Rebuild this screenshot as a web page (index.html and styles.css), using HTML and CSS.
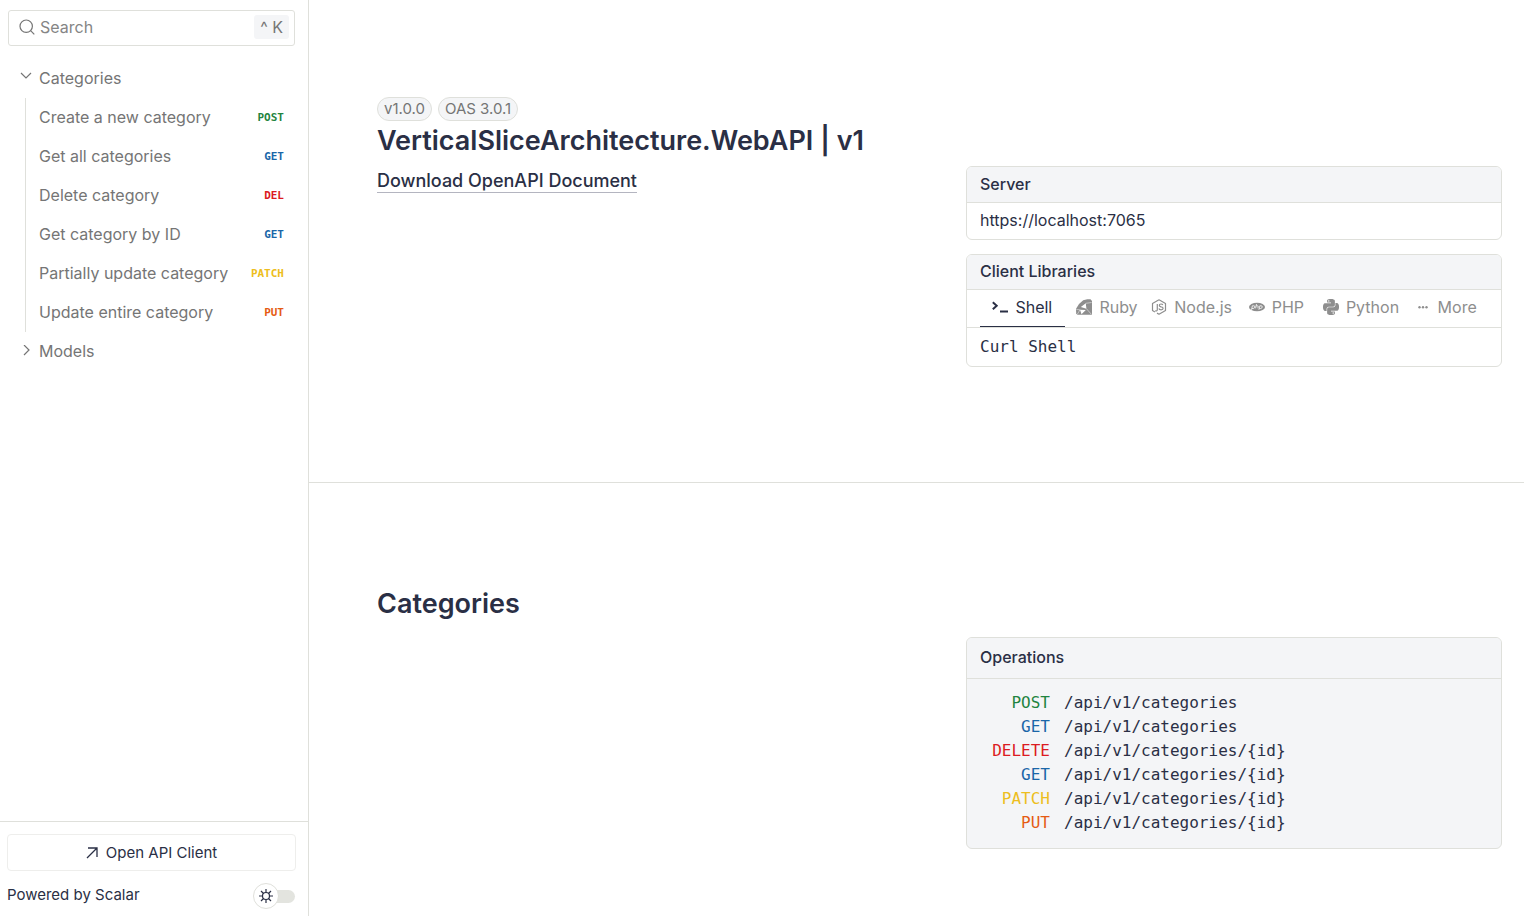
FILE: index.html
```html
<!DOCTYPE html>
<html lang="en">
<head>
<meta charset="utf-8">
<meta name="viewport" content="width=device-width, initial-scale=1">
<title>VerticalSliceArchitecture.WebAPI | v1</title>
<link rel="stylesheet" href="styles.css">
</head>
<body>
<div class="layout">
  <aside class="sidebar">
    <label class="search">
      <svg class="search-icon" viewBox="0 0 16 16" aria-hidden="true"><circle cx="7.2" cy="7.2" r="6.2"/><path d="M11.6 11.6l3.7 3.7"/></svg>
      <input class="search-input" type="search" placeholder="Search" aria-label="Search">
      <kbd class="shortcut"><span class="shortcut-mod">^</span> K</kbd>
    </label>
    <nav class="nav" aria-label="API reference">
      <a class="nav-item" href="#categories"><svg class="chevron" viewBox="0 0 12 12" aria-hidden="true"><path d="M1 1l5 5 5-5"/></svg>Categories</a>
      <div class="nav-group">
        <a class="nav-item nav-child" href="#op1">Create a new category<span class="method post">POST</span></a>
        <a class="nav-item nav-child" href="#op2">Get all categories<span class="method get">GET</span></a>
        <a class="nav-item nav-child" href="#op3">Delete category<span class="method delete">DEL</span></a>
        <a class="nav-item nav-child" href="#op4">Get category by ID<span class="method get">GET</span></a>
        <a class="nav-item nav-child" href="#op5">Partially update category<span class="method patch">PATCH</span></a>
        <a class="nav-item nav-child" href="#op6">Update entire category<span class="method put">PUT</span></a>
      </div>
      <a class="nav-item" href="#models"><svg class="chevron" viewBox="0 0 12 12" aria-hidden="true"><path d="M4 0l5 5-5 5"/></svg>Models</a>
    </nav>
    <footer class="sidebar-footer">
      <button class="client-button" type="button"><svg class="arrow" viewBox="0 0 12 12" aria-hidden="true"><path d="M1 11L11 1M2 1h9v9"/></svg>Open API Client</button>
      <div class="footer-row">
        <a class="powered" href="#scalar">Powered by Scalar</a>
        <label class="toggle">
          <input class="toggle-input" type="checkbox" aria-label="Dark mode">
          <span class="toggle-knob"><svg class="sun" viewBox="0 0 14 14" aria-hidden="true"><circle cx="7" cy="7" r="3.5"/><path d="M7 0v3.5M7 10.5V14M0 7h3.5M10.5 7H14M2 2l2.5 2.5M9.5 9.5L12 12M12 2L9.500 4.500M4.500 9.500L2 12"/></svg></span>
        </label>
      </div>
    </footer>
  </aside>

  <main class="content">
    <section class="section intro">
      <div class="section-text">
        <div class="badges"><span class="badge">v1.0.0</span><span class="badge">OAS 3.0.1</span></div>
        <h1 class="title">VerticalSliceArchitecture.WebAPI | v1</h1>
        <a class="download" href="#openapi">Download OpenAPI Document</a>
      </div>
      <div class="section-cards">
        <div class="card">
          <h2 class="card-head">Server</h2>
          <div class="card-row">https://localhost:7065</div>
        </div>
        <div class="card">
          <h2 class="card-head card-head-tabs">Client Libraries</h2>
          <div class="tabs">
            <button class="tab active" type="button"><svg class="lang" viewBox="0 0 16 16" aria-hidden="true"><path fill="none" stroke="currentColor" stroke-width="2" d="M.8 3.300L4.700 6.800.8 10.300M8 12.600h8"/></svg>Shell</button>
            <button class="tab" type="button"><svg class="lang" viewBox="0 0 16 16" aria-hidden="true"><path fill="currentColor" d="M11.300.3L14.500.2 16 2v13.700L1.200 15.800.2 14.600 0 9.700 3 5 7.200 1.300z"/><path fill="#fff" d="M9.800 4.300l.6 5.400-5.600-1.600zM4 10.800l5.800.2-4.300 4.300z"/><path fill="none" stroke="#fff" stroke-width=".5" d="M.3 10.500l3.700.3L1.200 15.500M10.400 9.700l5 5.600M9.800 4.300l5.800-.8"/></svg>Ruby</button>
            <button class="tab" type="button"><svg class="lang" viewBox="0 0 16 16" aria-hidden="true"><path fill="none" stroke="currentColor" stroke-width="1.200" stroke-linejoin="round" d="M8 .8l6.500 3.700v7L8 15.200l-2-1.100M3.900 13l-2.400-1.500v-7L8 .8"/><path fill="none" stroke="currentColor" stroke-width="1.200" d="M6.300 5v5.500q0 2-2.200 1.300M11.800 6Q11.300 5 10 5 8.300 5 8.300 6.300q0 1.200 1.800 1.500 2 .2 2 1.500 0 1.500-2 1.500-1.900 0-2.200-1.300"/></svg>Node.js</button>
            <button class="tab" type="button"><svg class="lang" viewBox="0 0 16 16" aria-hidden="true"><ellipse cx="8" cy="8" rx="8" ry="4.300" fill="currentColor"/><path fill="none" stroke="#fff" stroke-width=".8" d="M2.500 10.800l.9-4h1.400q1.300 0 1 1.300-.3 1.400-1.600 1.400H3M7.500 5l-.9 4.300M7.200 6.800h1.300q.9 0 .7.900l-.3 1.600M9.900 10.800l.9-4h1.400q1.300 0 1 1.300-.3 1.400-1.600 1.400h-1.200"/></svg>PHP</button>
            <button class="tab" type="button"><svg class="lang" viewBox="0 0 24 24" aria-hidden="true"><path fill="currentColor" d="M14.25.18l.9.2.73.26.59.3.45.32.34.34.25.34.16.33.1.3.04.26.02.2-.01.13V8.500l-.05.63-.13.55-.21.46-.26.38-.3.31-.33.25-.35.19-.35.14-.33.1-.3.07-.26.04-.21.02H8.770l-.69.05-.59.14-.5.22-.41.27-.33.32-.27.35-.2.36-.15.37-.1.35-.07.32-.04.27-.02.21v3.060H3.170l-.21-.03-.28-.07-.32-.12-.35-.18-.36-.26-.36-.36-.35-.46-.32-.59-.28-.73-.21-.88-.14-1.050-.05-1.230.06-1.220.16-1.040.24-.87.32-.71.36-.57.4-.44.42-.33.42-.24.4-.16.36-.1.32-.05.24-.01h.16l.06.01h8.160v-.83H6.180l-.01-2.750-.02-.37.05-.34.11-.31.17-.28.25-.26.31-.23.38-.2.44-.18.51-.15.58-.12.64-.1.71-.06.77-.04.84-.02 1.270.05zm-6.300 1.980l-.23.33-.08.41.08.41.23.34.33.22.41.09.41-.09.33-.22.23-.34.08-.41-.08-.41-.23-.33-.33-.22-.41-.09-.41.09zm13.090 3.950l.28.06.32.12.35.18.36.27.36.35.35.47.32.59.28.73.21.88.14 1.040.05 1.230-.06 1.230-.16 1.040-.24.86-.32.71-.36.57-.4.45-.42.33-.42.24-.4.16-.36.09-.32.05-.24.02-.16-.01h-8.220v.82h5.840l.01 2.760.02.36-.05.34-.11.31-.17.29-.25.25-.31.24-.38.2-.44.17-.51.15-.58.13-.64.09-.71.07-.77.04-.84.01-1.270-.04-1.070-.14-.9-.2-.73-.25-.59-.3-.45-.33-.34-.34-.25-.34-.16-.33-.1-.3-.04-.25-.02-.2.01-.13v-5.340l.05-.64.13-.54.21-.46.26-.38.3-.32.33-.24.35-.2.35-.14.33-.1.3-.06.26-.04.21-.02.13-.01h5.840l.69-.05.59-.14.5-.21.41-.28.33-.32.27-.35.2-.36.15-.36.1-.35.07-.32.04-.28.02-.21V6.070h2.090l.14.01zm-6.470 14.250l-.23.33-.08.41.08.41.23.33.33.23.41.08.41-.08.33-.23.23-.33.08-.41-.08-.41-.23-.33-.33-.23-.41-.08-.41.08z"/></svg>Python</button>
            <button class="tab" type="button"><svg class="lang" viewBox="0 0 16 16" aria-hidden="true"><g fill="currentColor"><circle cx="4.500" cy="8.300" r="1.200"/><circle cx="8" cy="8.300" r="1.200"/><circle cx="11.500" cy="8.300" r="1.200"/></g></svg>More</button>
          </div>
          <div class="card-row card-row-code mono">Curl Shell</div>
        </div>
      </div>
    </section>

    <section class="section group" id="categories">
      <div class="section-text"><h2 class="title">Categories</h2></div>
      <div class="section-cards">
        <div class="card card-filled">
          <h3 class="card-head card-head-tall">Operations</h3>
          <div class="operations mono">
            <a class="operation" href="#op1"><span class="verb post">POST</span><span>/api/v1/categories</span></a>
            <a class="operation" href="#op2"><span class="verb get">GET</span><span>/api/v1/categories</span></a>
            <a class="operation" href="#op3"><span class="verb delete">DELETE</span><span>/api/v1/categories/{id}</span></a>
            <a class="operation" href="#op4"><span class="verb get">GET</span><span>/api/v1/categories/{id}</span></a>
            <a class="operation" href="#op5"><span class="verb patch">PATCH</span><span>/api/v1/categories/{id}</span></a>
            <a class="operation" href="#op6"><span class="verb put">PUT</span><span>/api/v1/categories/{id}</span></a>
          </div>
        </div>
      </div>
    </section>
  </main>
</div>
</body>
</html>
```
FILE: styles.css
```css
:root {
  --text: #2a2f45;
  --muted: #757575;
  --faint: #8e8e8e;
  --line: #dfe0db;
  --fill: #f4f5f7;
}

* { box-sizing: border-box; }

body {
  margin: 0;
  background: #fff;
  color: var(--text);
  font: 400 16px/24px Inter, "Liberation Sans", sans-serif;
}

a { color: inherit; text-decoration: none; }
h1, h2, h3 { margin: 0; }
button, input, kbd { font: inherit; color: inherit; }
svg { flex: none; }

.layout {
  display: grid;
  grid-template-columns: 309px 1fr;
  min-height: 100vh;
}

.sidebar {
  position: sticky;
  top: 0;
  height: 100vh;
  display: flex;
  flex-direction: column;
  border-right: 1px solid var(--line);
  color: var(--muted);
}

.search {
  display: flex;
  align-items: center;
  gap: 5px;
  margin: 10px 13px 0 8px;
  height: 36px;
  padding: 0 5px 2px 10px;
  border: 1px solid var(--line);
  border-radius: 3px;
}
.search-icon {
  width: 16px;
  height: 16px;
  fill: none;
  stroke: currentColor;
  stroke-width: 1.2;
}
.search-input {
  flex: 1;
  min-width: 0;
  padding: 0;
  border: 0;
  outline: 0;
  background: none;
}
.search-input::placeholder { color: #858585; opacity: 1; }
.shortcut {
  padding: 0 6px;
  border-radius: 3px;
  background: var(--fill);
}

.nav {
  flex: 1;
  overflow: auto;
  padding: 13px 13px 0 8px;
}
.nav-item {
  display: flex;
  align-items: center;
  gap: 7px;
  height: 39px;
  padding: 0 0 2px 12px;
}
.nav-group {
  margin-left: 17px;
  border-left: 1px solid var(--line);
}
.nav-child {
  justify-content: space-between;
  padding: 0 11px 2px 13px;
}
.chevron {
  width: 12px;
  height: 12px;
  fill: none;
  stroke: currentColor;
  stroke-width: 1.2;
}
.method {
  padding-top: 2px;
  font: 700 11px/16px "DejaVu Sans Mono", "Liberation Mono", monospace;
}

.post { color: #1f8440; }
.get { color: #1a66a8; }
.delete { color: #dc1b22; }
.patch { color: #edbe20; }
.put { color: #e55b13; }

.sidebar-footer {
  padding: 12px 12px 7px 7px;
  border-top: 1px solid var(--line);
  color: var(--text);
  font-size: 15px;
}
.client-button {
  display: flex;
  align-items: center;
  justify-content: center;
  gap: 8px;
  width: 100%;
  height: 37px;
  border: 1px solid #eeeeec;
  border-radius: 4px;
  background: #fff;
  cursor: pointer;
}
.arrow {
  width: 12px;
  height: 12px;
  fill: none;
  stroke: currentColor;
  stroke-width: 1.3;
}
.footer-row {
  display: flex;
  align-items: center;
  justify-content: space-between;
  margin-top: 12px;
  padding: 0 1px 0 0;
}
.powered { padding-bottom: 2px; }
.toggle {
  position: relative;
  display: flex;
  align-items: center;
  width: 42px;
  height: 26px;
}
.toggle-input {
  appearance: none;
  width: 36px;
  height: 13px;
  margin: 0 0 0 auto;
  border-radius: 7px;
  background: #e3e4df;
}
.toggle-knob {
  position: absolute;
  left: 0;
  top: 0;
  display: grid;
  place-items: center;
  width: 26px;
  height: 26px;
  border: 1px solid var(--line);
  border-radius: 50%;
  background: #fff;
}
.sun {
  width: 14px;
  height: 14px;
  fill: none;
  stroke: currentColor;
  stroke-width: 1.2;
}

.content { min-width: 0; }
.section {
  display: grid;
  grid-template-columns: minmax(0, 1fr) minmax(0, 1fr);
  gap: 53px;
  padding: 97px 22px 115px 68px;
}
.intro { border-bottom: 1px solid var(--line); }
.section-cards {
  display: grid;
  gap: 14px;
  align-content: start;
  padding-top: 69px;
}
.group { padding-top: 101px; padding-bottom: 64px; }
.group .section-cards { padding-top: 53px; }

.badges { display: flex; gap: 6px; }
.badge {
  padding: 0 6px;
  border: 1px solid var(--line);
  border-radius: 12px;
  background: var(--fill);
  color: var(--muted);
  font-size: 15px;
  line-height: 22px;
}
.title {
  font-size: 27px;
  font-weight: 600;
  line-height: 40px;
}
.download {
  display: inline-block;
  margin-top: 8px;
  border-bottom: 1px solid #b4b5c0;
  font-size: 18px;
  font-weight: 500;
  line-height: 23px;
}

.card {
  overflow: hidden;
  border: 1px solid var(--line);
  border-radius: 6px;
}
.card-filled { background: var(--fill); }
.card-head {
  padding: 5px 13px 6px;
  border-bottom: 1px solid var(--line);
  background: var(--fill);
  font-size: 16px;
  font-weight: 500;
  line-height: 24px;
}
.card-head-tabs { padding: 4px 13px 6px; }
.card-head-tall { padding: 7px 13px 9px; }
.card-row { padding: 5px 13px 7px; }
.card-row-code { padding: 7px 13px; }
.mono { font-family: "DejaVu Sans Mono", "Liberation Mono", monospace; font-size: 16px; }

.tabs {
  display: grid;
  grid-template-columns: repeat(6, 1fr);
  padding: 0 13px;
  border-bottom: 1px solid var(--line);
}
.tab {
  display: flex;
  align-items: center;
  justify-content: center;
  gap: 7px;
  height: 37px;
  padding: 0 0 2px;
  border: 0;
  border-bottom: 1px solid transparent;
  background: none;
  color: var(--faint);
  white-space: nowrap;
  cursor: pointer;
}
.tab.active { border-bottom-color: var(--text); color: var(--text); }
.lang { width: 16px; height: 16px; }

.operations { padding: 12px 13px 13px; }
.operation {
  display: grid;
  grid-template-columns: 70px 1fr;
  gap: 14px;
  line-height: 24px;
}
.verb { text-align: right; }
```
